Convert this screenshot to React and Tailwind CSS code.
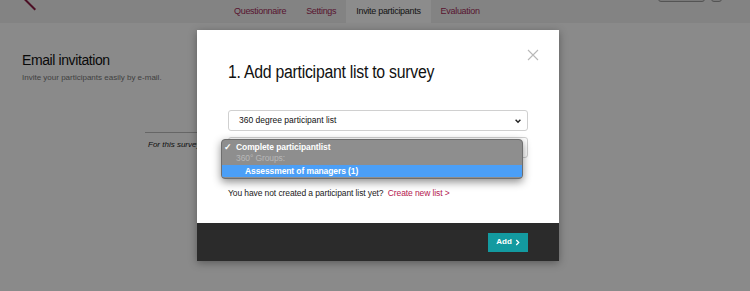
import React from "react";

const tabs = ["Questionnaire", "Settings", "Invite participants", "Evaluation"];

function Chevron({ className }) {
  return (
    <svg viewBox="0 0 10 10" className={className} fill="none" stroke="currentColor" strokeWidth="1.8">
      <path d="M2 3.5l3 3 3-3" />
    </svg>
  );
}

export default function App() {
  return (
    <div
      className="relative h-[291px] w-full overflow-hidden bg-[#fbfbfb] text-[#111]"
      style={{ fontFamily: '"Liberation Sans", Arial, sans-serif' }}
    >
      {/* Header */}
      <div className="relative flex h-[23px] items-stretch bg-[#eeeeee] pl-[224px]">
        <div className="absolute left-[29px] top-[-3px] h-[15px] w-[2px] rotate-[-45deg] bg-[#8a1c44]" />
        <div className="absolute right-[45px] top-[-6px] h-[8px] w-[47px] rounded-[3px] border border-[#999] bg-[#ddd]" />
        <div className="absolute right-[28px] top-[-6px] h-[8px] w-[11px] rounded-[3px] border border-[#999] bg-[#ddd]" />
        <div className="flex items-stretch text-[9px] tracking-[-0.3px]">
          {tabs.map((t) => (
            <div
              key={t}
              className={
                t === "Invite participants"
                  ? "flex items-center bg-white px-[10px] text-[#2a2a2a]"
                  : "flex items-center px-[10px] text-[#a22a58]"
              }
            >
              {t}
            </div>
          ))}
        </div>
      </div>

      {/* Page content */}
      <div className="px-[22px] pt-[28px]">
        <h2 className="text-[14px] leading-[18px] tracking-[-0.4px] text-[#111]">Email invitation</h2>
        <p className="mt-[3px] text-[8px] text-[#777]">Invite your participants easily by e-mail.</p>
        <div className="ml-[123px] mt-[48px] w-[300px] border-t border-[#bbb] pt-[6px] pl-[3px]">
          <p className="text-[8px] italic text-[#222]">For this survey, you can add participant lists.</p>
        </div>
      </div>

      {/* Overlay */}
      <div className="absolute inset-0 bg-black/45" />

      {/* Modal */}
      <div className="absolute left-[197px] top-[30px] flex h-[231px] w-[362px] flex-col bg-white shadow-[0_2px_8px_rgba(0,0,0,0.35)]">
        <div className="relative flex-1 px-[31px] pt-[31px]">
          <svg viewBox="0 0 12 12" className="absolute right-[20px] top-[19px] h-[12px] w-[12px]" stroke="#b8b8b8" strokeWidth="1.1">
            <path d="M1 1l10 10M11 1L1 11" />
          </svg>
          <h1 className="origin-left scale-x-[0.88] whitespace-nowrap text-[18px] leading-[22px] tracking-[-0.3px] text-[#111]">
            1. Add participant list to survey
          </h1>

          <div className="relative mt-[27px] flex h-[21px] items-center justify-between rounded-[3px] border border-[#d0d0d0] bg-white pl-[10px] pr-[5px] text-[8.5px] text-[#111]">
            <span>360 degree participant list</span>
            <Chevron className="h-[8px] w-[8px] text-[#222]" />
          </div>

          <div className="relative mt-[6px] flex h-[21px] items-center justify-end rounded-[3px] border border-[#d0d0d0] bg-white pr-[3px]">
            <Chevron className="h-[8px] w-[8px] text-[#222]" />
            {/* Native dropdown list */}
            <div className="absolute left-[-8px] top-[1px] w-[302px] overflow-hidden rounded-[4px] border border-[#6e6e6e] bg-[#8e8e8e] pt-[2px] pb-[1px] text-[8.5px] font-bold leading-[11px] tracking-[-0.1px] shadow-[0_3px_8px_rgba(0,0,0,0.45)]">
              <div className="flex items-center pl-[2px] text-white">
                <span className="w-[12px] text-[9px]">✓</span>
                <span>Complete participantlist</span>
              </div>
              <div className="pl-[14px] font-normal text-[#b8b8b8]">360° Groups:</div>
              <div className="mt-[1px] bg-[#4b9ff7] pl-[23px] leading-[12px] text-white">Assessment of managers (1)</div>
            </div>
          </div>

          <p className="mt-[29px] text-[8.5px] tracking-[-0.1px] text-[#1a1a1a]">
            You have not created a participant list yet?{" "}
            <span className="ml-[2px] text-[#b4174f]">Create new list &gt;</span>
          </p>
        </div>

        <div className="flex h-[38px] items-center justify-end bg-[#2b2b2b] pr-[31px]">
          <button className="flex h-[19px] w-[40px] items-center justify-center gap-[3px] bg-[#139aa0] text-[8px] font-bold text-white">
            Add
            <svg viewBox="0 0 8 10" className="h-[7px] w-[5px]" fill="none" stroke="white" strokeWidth="2">
              <path d="M2 1l4 4-4 4" />
            </svg>
          </button>
        </div>
      </div>
    </div>
  );
}
